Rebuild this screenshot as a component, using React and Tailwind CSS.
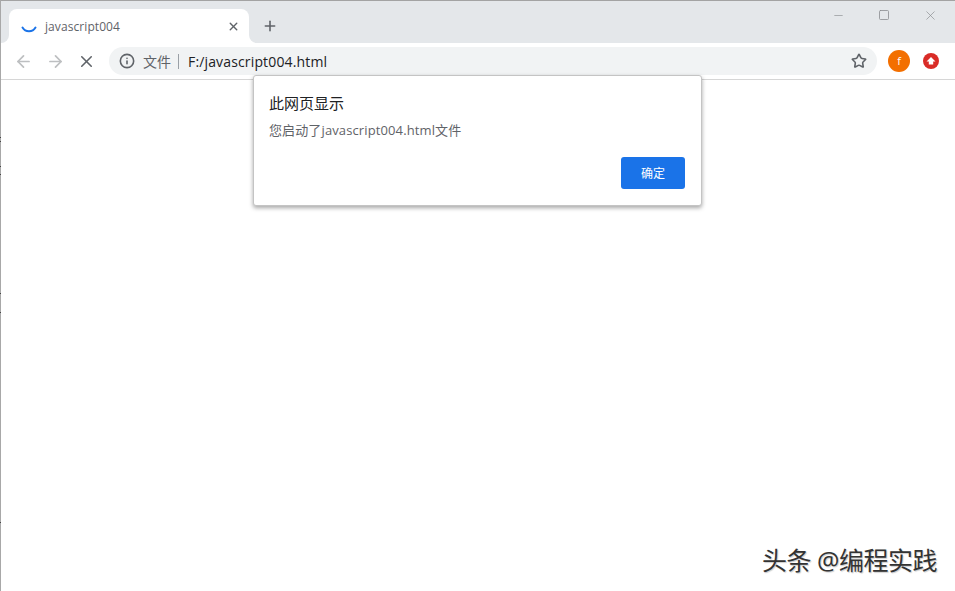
import React from "react";
import { ArrowLeft, ArrowRight, X, Plus, Info, Star, Minus, Square } from "lucide-react";

const CJK = "font-['Open_Sans','Noto_Sans_CJK_SC',sans-serif]";

const EDGE_TICKS = [137, 141, 166, 174, 293, 312, 522];

const TabFlare = ({ side }) => (
  <div className="absolute bottom-0 w-2 h-2 bg-white" style={side === "left" ? { left: -8 } : { right: -8 }}>
    <div className={side === "left" ? "w-2 h-2 bg-[#e4e7ea] rounded-br-lg" : "w-2 h-2 bg-[#e4e7ea] rounded-bl-lg"} />
  </div>
);

const Dialog = () => (
  <div className="absolute left-[252px] top-[75px] w-[449px] h-[131px] bg-white rounded-[3px] border border-[#c4c4c4] shadow-[0_2px_4px_rgba(0,0,0,0.35)] pl-[15px] pr-[16px] pt-[17px]">
    <div className="text-[15px] leading-[20px] text-[#202124]">此网页显示</div>
    <div className="mt-[8px] text-[13px] leading-[18px] tracking-[0.12px] text-[#5f6368]">您启动了javascript004.html文件</div>
    <div className="flex justify-end mt-[18px]">
      <button className="w-[64px] h-[32px] rounded-[3px] bg-[#1a73e8] text-white text-[12px] pt-px">确定</button>
    </div>
  </div>
);

export default function App() {
  return (
    <div className={`relative w-[955px] h-[591px] bg-white border-l border-[#a8a8a8] ${CJK}`}>
      {/* tab strip */}
      <div className="flex h-[43px] bg-[#e4e7ea] border-t border-[#a3a3a3]">
        <div className="relative flex items-center ml-[8px] mt-[8px] w-[240px] h-[34px] bg-white rounded-t-[8px]">
          <TabFlare side="left" />
          <TabFlare side="right" />
          <svg className="ml-[12px] mt-[1px]" width="16" height="16" viewBox="0 0 16 16" fill="none">
            <path d="M1.5 8.5 A7.5 7.5 0 0 0 14.5 8.5" stroke="#1a73e8" strokeWidth="2" strokeLinecap="round" />
          </svg>
          <span className="ml-[8px] text-[12px] tracking-[0.08px] text-[#5f6368] mt-[1px]">javascript004</span>
          <X className="ml-auto mr-[9px] text-[#5f6368]" size={13} strokeWidth={2.6} />
        </div>
        <Plus className="ml-[13px] mt-[17px] text-[#5f6368]" size={16} strokeWidth={2.4} />
        <div className="ml-auto flex items-start text-[#8a8d90]">
          <Minus className="mt-[8px] -translate-x-px" size={13} strokeWidth={1.2} />
          <Square className="ml-[32px] mt-[8px]" size={12} strokeWidth={1.6} />
          <X className="ml-[33px] mr-[17px] mt-[7px]" size={15} strokeWidth={1.1} />
        </div>
      </div>

      {/* toolbar */}
      <div className="flex items-center h-[37px] bg-white border-b border-[#d6d6d6]">
        <ArrowLeft className="ml-[13px] text-[#bdbfc1]" size={19} strokeWidth={2.2} />
        <ArrowRight className="ml-[13px] text-[#bdbfc1]" size={19} strokeWidth={2.2} />
        <X className="ml-[12px] text-[#5f6368]" size={19} strokeWidth={2} />
        <div className="flex items-center ml-[13px] w-[768px] h-[28px] rounded-full bg-[#f1f3f4]">
          <Info className="ml-[10px] text-[#5f6368]" size={16} strokeWidth={2.4} />
          <span className="ml-[8px] text-[14px] text-[#5f6368]">文件</span>
          <span className="ml-[7px] w-px h-[15px] bg-[#9aa0a6]" />
          <span className="ml-[9px] text-[14px] tracking-[0.15px] text-[#202124]">F:/javascript004.html</span>
          <Star className="ml-auto mr-[10px] text-[#5f6368]" size={16} strokeWidth={2.4} />
        </div>
        <div className="flex items-center justify-center ml-[11px] w-[22px] h-[22px] rounded-full bg-[#f36f00] text-white text-[11px]">f</div>
        <div className="flex items-center justify-center ml-[13px] w-4 h-4 rounded-full bg-[#d92c27]">
          <svg width="10" height="10" viewBox="0 0 10 10">
            <path d="M5 1 L9.5 5.4 H7.2 V8.5 H2.8 V5.4 H0.5 Z" fill="#fff" />
          </svg>
        </div>
      </div>

      <Dialog />

      {EDGE_TICKS.map((y) => (
        <span key={y} className="absolute -left-px w-px h-px bg-[#444]" style={{ top: y }} />
      ))}

      {/* watermark */}
      <div className="absolute left-[761px] top-[545px] text-[25px] leading-[30px] tracking-[-0.5px] text-[#333] whitespace-nowrap [text-shadow:1px_1px_1px_#ccc]">头条 @编程实践</div>
    </div>
  );
}
